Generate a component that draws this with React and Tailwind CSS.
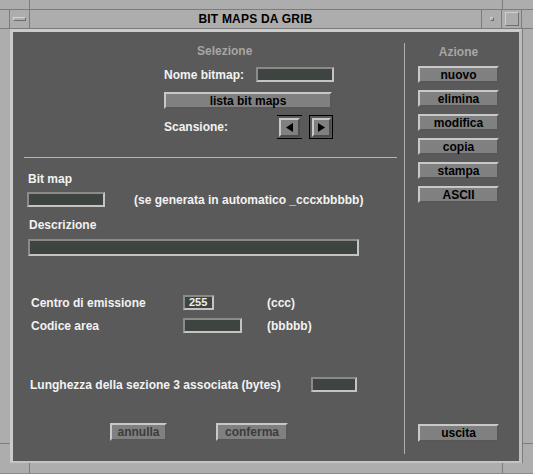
import React from "react";

const Btn = ({ children, className = "", disabled = false }) => (
  <div
    className={`flex items-center justify-center bg-[#808080] border-2 border-t-[#c8c8c8] border-l-[#c8c8c8] border-b-[#585858] border-r-[#585858] text-[12px] leading-[12px] font-bold ${disabled ? "text-[#3c3c3c]" : "text-black"} ${className}`}
  >
    {children}
  </div>
);

const Field = ({ className = "", children }) => (
  <div
    className={`h-[15px] bg-[#3e4440] border-2 border-t-[#8a8a8a] border-l-[#8a8a8a] border-b-[#c4c4c4] border-r-[#c4c4c4] text-[11px] leading-[11px] font-bold text-[#eeeeee] pl-[4px] ${className}`}
  >
    {children}
  </div>
);

const Label = ({ children, className = "" }) => (
  <div className={`h-[14px] text-[12px] leading-[14px] font-bold text-[#f2f2f2] whitespace-nowrap ${className}`}>{children}</div>
);

export default function App() {
  return (
    <div className="w-[533px] h-[474px] bg-[#adadad] flex flex-col font-['Liberation_Sans',Arial,sans-serif] select-none">
      {/* top frame strip */}
      <div className="h-[10px] flex border-b border-[#7c7c7c]">
        <div className="w-[30px] border-r border-[#7c7c7c]" />
        <div className="flex-1 border-r border-[#7c7c7c]" />
        <div className="w-[30px]" />
      </div>

      {/* title bar */}
      <div className="h-[19px] flex border-b border-[#7c7c7c]">
        <div className="w-[10px] border-r border-[#7c7c7c]" />
        <div className="w-[20px] border-r border-[#7c7c7c] flex items-center justify-center">
          <div className="w-[13px] h-[4px] border-t border-l border-[#d4d4d4] border-b border-r border-b-[#6e6e6e] border-r-[#6e6e6e]" />
        </div>
        <div className="flex-1 border-r border-[#7c7c7c] flex items-center justify-center text-[12px] font-bold text-black tracking-[0.2px]">
          BIT MAPS DA GRIB
        </div>
        <div className="w-[20px] border-r border-[#7c7c7c] flex items-center justify-center">
          <div className="w-[4px] h-[4px] border border-t-[#d0d0d0] border-l-[#d0d0d0] border-b-[#6e6e6e] border-r-[#6e6e6e]" />
        </div>
        <div className="w-[20px] border-r border-[#7c7c7c] flex items-center justify-center">
          <div className="w-[14px] h-[14px] border border-t-[#d0d0d0] border-l-[#d0d0d0] border-b-[#6e6e6e] border-r-[#6e6e6e]" />
        </div>
        <div className="w-[11px]" />
      </div>

      {/* body */}
      <div className="flex-1 flex">
        <div className="w-[10px] flex flex-col">
          <div className="h-[415px] border-b border-[#7c7c7c]" />
          <div className="flex-1" />
        </div>

        <div className="w-[512px] border-t-[3px] border-l-[3px] border-t-[#cbcbcb] border-l-[#cbcbcb] border-b-2 border-r-[3px] border-b-[#c4c4c4] border-r-[#bdbdbd] bg-[#5a5a5a] flex">
          {/* left panel */}
          <div className="w-[391px] flex flex-col">
            <div className="ml-[151px] w-[170px] flex flex-col">
              <div className="mt-[12px] ml-[33px] h-[14px] text-[12px] leading-[14px] font-bold text-[#a6a6a6]">Selezione</div>
              <div className="mt-[9px] flex items-center justify-between">
                <Label>Nome bitmap:</Label>
                <Field className="w-[78px]" />
              </div>
              <Btn className="mt-[10px] h-[17px] w-[168px]">lista bit maps</Btn>
              <div className="mt-[6px] flex items-center">
                <Label>Scansione:</Label>
                <div className="ml-auto flex gap-[7px] mr-[1px]">
                  <div className="w-[25px] h-[24px] border-y border-black flex items-center pl-[2px]">
                    <div className="w-[21px] h-[19px] bg-[#808080] border-2 border-t-[#c8c8c8] border-l-[#c8c8c8] border-b-[#4e4e4e] border-r-[#4e4e4e] flex items-center justify-center">
                      <svg width="8" height="9" viewBox="0 0 8 9">
                        <polygon points="7,0 7,9 0,4.5" fill="#000" />
                      </svg>
                    </div>
                  </div>
                  <div className="w-[24px] h-[24px] border border-black flex items-center justify-center">
                    <div className="w-[19px] h-[19px] bg-[#808080] border-2 border-t-[#c8c8c8] border-l-[#c8c8c8] border-b-[#4e4e4e] border-r-[#4e4e4e] flex items-center justify-center">
                      <svg width="8" height="9" viewBox="0 0 8 9">
                        <polygon points="1,0 1,9 8,4.5" fill="#000" />
                      </svg>
                    </div>
                  </div>
                </div>
              </div>
            </div>

            <div className="mt-[18px] ml-[11px] w-[373px] h-px bg-[#b4b4b4]" />

            <Label className="mt-[14px] ml-[15px]">Bit map</Label>
            <div className="mt-[6px] ml-[14px] flex items-center">
              <Field className="w-[78px]" />
              <Label className="ml-[29px]">(se generata in automatico _cccxbbbbb)</Label>
            </div>
            <Label className="mt-[11px] ml-[16px]">Descrizione</Label>
            <Field className="mt-[7px] ml-[15px] w-[331px] h-[17px]" />

            <div className="mt-[39px] ml-[18px] flex items-center">
              <Label className="w-[152px]">Centro di emissione</Label>
              <div className="w-[84px]">
                <Field className="w-[31px] flex items-center">255</Field>
              </div>
              <Label>(ccc)</Label>
            </div>
            <div className="mt-[8px] ml-[18px] flex items-center">
              <Label className="w-[152px]">Codice area</Label>
              <div className="w-[84px]">
                <Field className="w-[59px]" />
              </div>
              <Label>(bbbbb)</Label>
            </div>

            <div className="mt-[44px] ml-[17px] flex items-center">
              <Label className="w-[281px]">Lunghezza della sezione 3 associata (bytes)</Label>
              <Field className="w-[46px]" />
            </div>

            <div className="mt-[31px] ml-[97px] flex gap-[49px]">
              <Btn disabled className="h-[18px] w-[57px]">annulla</Btn>
              <Btn disabled className="h-[18px] w-[72px]">conferma</Btn>
            </div>
          </div>

          {/* divider */}
          <div className="mt-[11px] mb-[7px] w-px bg-[#b0b0b0]" />

          {/* right panel */}
          <div className="flex-1 flex flex-col pl-[13px]">
            <div className="w-[81px] flex flex-col gap-[7px]">
              <div className="mt-[13px] h-[14px] text-[12px] leading-[14px] font-bold text-[#a6a6a6] text-center">Azione</div>
              <Btn className="h-[17px]">nuovo</Btn>
              <Btn className="h-[17px]">elimina</Btn>
              <Btn className="h-[17px]">modifica</Btn>
              <Btn className="h-[17px]">copia</Btn>
              <Btn className="h-[17px]">stampa</Btn>
              <Btn className="h-[17px]">ASCII</Btn>
            </div>
            <Btn className="mt-auto mb-[19px] h-[18px] w-[81px]">uscita</Btn>
          </div>
        </div>

        <div className="flex-1 flex flex-col border-l border-[#7c7c7c]">
          <div className="h-[415px] border-b border-[#7c7c7c]" />
          <div className="flex-1" />
        </div>
      </div>

      {/* bottom frame strip */}
      <div className="h-[11px] flex border-b border-[#8a8a8a]">
        <div className="w-[30px] border-r border-[#7c7c7c]" />
        <div className="flex-1 border-r border-[#7c7c7c]" />
        <div className="w-[30px]" />
      </div>
    </div>
  );
}
